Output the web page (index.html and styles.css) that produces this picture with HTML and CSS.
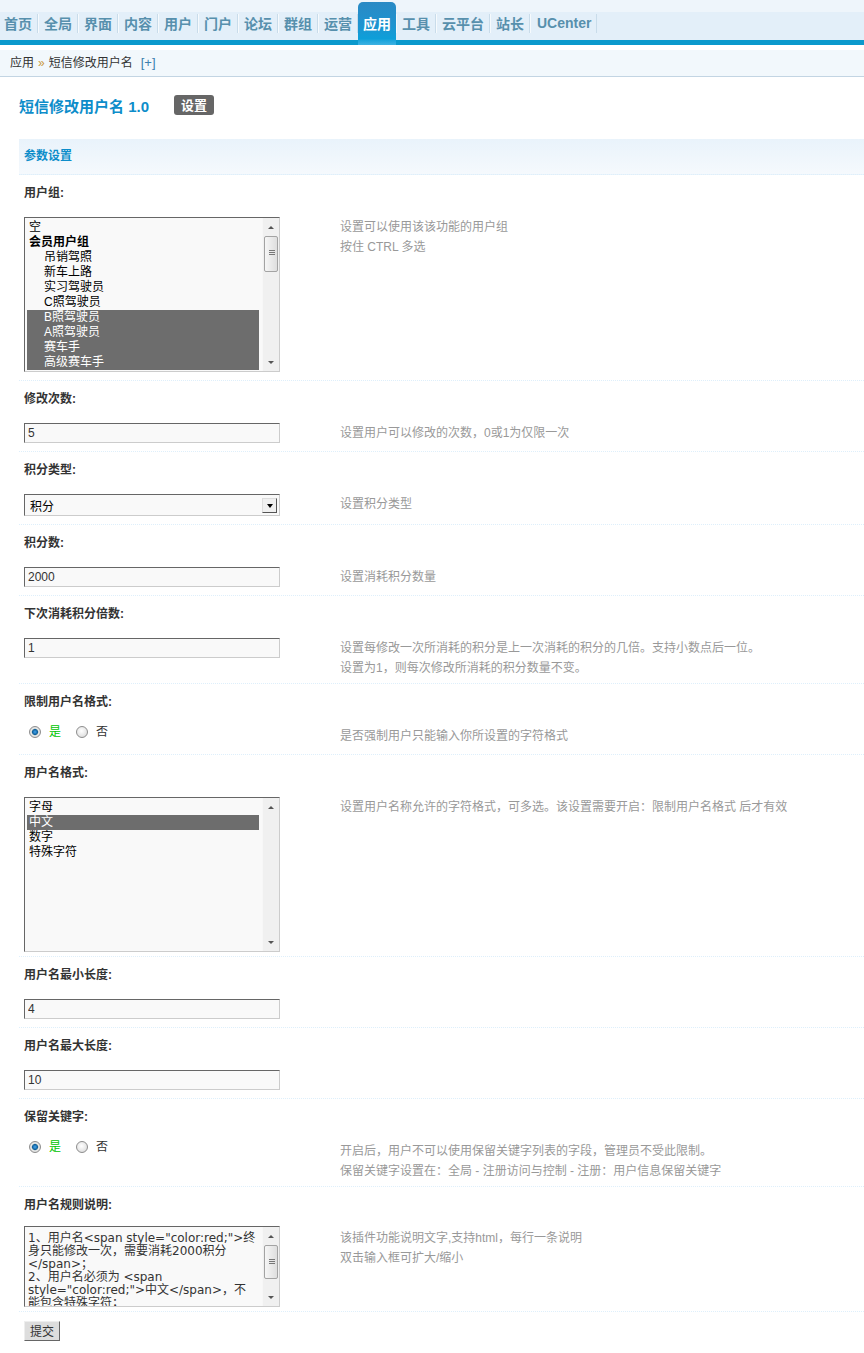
FILE: index.html
```html
<!DOCTYPE html>
<html lang="zh-CN">
<head>
    <meta charset="UTF-8">
    <title>短信修改用户名 - 应用</title>
    <link rel="stylesheet" href="styles.css">
</head>
<body>
    <div class="header">
        <ul class="nav">
            <li><a href="#">首页</a></li>
            <li><a href="#">全局</a></li>
            <li><a href="#">界面</a></li>
            <li><a href="#">内容</a></li>
            <li><a href="#">用户</a></li>
            <li><a href="#">门户</a></li>
            <li><a href="#">论坛</a></li>
            <li><a href="#">群组</a></li>
            <li><a href="#">运营</a></li>
            <li class="active"><a href="#">应用</a></li>
            <li><a href="#">工具</a></li>
            <li><a href="#">云平台</a></li>
            <li><a href="#">站长</a></li>
            <li><a href="#" class="uc">UCenter</a></li>
        </ul>
    </div>

    <div class="crumb">应用<em>&raquo;</em>短信修改用户名<a href="#" class="plus">[+]</a></div>

    <div class="main">
        <div class="title-bar">
            <h3>短信修改用户名 1.0</h3>
            <span class="btn-dark">设置</span>
        </div>

        <div class="section-head">参数设置</div>

        <!-- 用户组 -->
        <div class="item">
            <div class="item-label">用户组:</div>
            <div class="item-row">
                <div class="field">
                    <div class="listbox">
                        <ul class="options">
                            <li>空</li>
                            <li class="group">会员用户组</li>
                            <li class="sub">吊销驾照</li>
                            <li class="sub">新车上路</li>
                            <li class="sub">实习驾驶员</li>
                            <li class="sub">C照驾驶员</li>
                            <li class="sub selected">B照驾驶员</li>
                            <li class="sub selected">A照驾驶员</li>
                            <li class="sub selected">赛车手</li>
                            <li class="sub selected">高级赛车手</li>
                        </ul>
                        <div class="vscroll">
                            <span class="arr up"></span>
                            <span class="thumb"></span>
                            <span class="track"></span>
                            <span class="arr down"></span>
                        </div>
                    </div>
                </div>
                <div class="tips">设置可以使用该该功能的用户组<br>按住 CTRL 多选</div>
            </div>
        </div>

        <!-- 修改次数 -->
        <div class="item">
            <div class="item-label">修改次数:</div>
            <div class="item-row">
                <div class="field"><input class="txt" type="text" value="5"></div>
                <div class="tips">设置用户可以修改的次数，0或1为仅限一次</div>
            </div>
        </div>

        <!-- 积分类型 -->
        <div class="item">
            <div class="item-label">积分类型:</div>
            <div class="item-row">
                <div class="field">
                    <div class="select">
                        <span>积分</span>
                        <span class="drop"><i></i></span>
                    </div>
                </div>
                <div class="tips">设置积分类型</div>
            </div>
        </div>

        <!-- 积分数 -->
        <div class="item">
            <div class="item-label">积分数:</div>
            <div class="item-row">
                <div class="field"><input class="txt" type="text" value="2000"></div>
                <div class="tips">设置消耗积分数量</div>
            </div>
        </div>

        <!-- 下次消耗积分倍数 -->
        <div class="item">
            <div class="item-label">下次消耗积分倍数:</div>
            <div class="item-row">
                <div class="field"><input class="txt" type="text" value="1"></div>
                <div class="tips">设置每修改一次所消耗的积分是上一次消耗的积分的几倍。支持小数点后一位。<br>设置为1，则每次修改所消耗的积分数量不变。</div>
            </div>
        </div>

        <!-- 限制用户名格式 -->
        <div class="item">
            <div class="item-label">限制用户名格式:</div>
            <div class="item-row">
                <div class="field">
                    <ul class="radios">
                        <li><span class="radio checked"></span><span class="yes">是</span></li>
                        <li><span class="radio"></span><span>否</span></li>
                    </ul>
                </div>
                <div class="tips">是否强制用户只能输入你所设置的字符格式</div>
            </div>
        </div>

        <!-- 用户名格式 -->
        <div class="item">
            <div class="item-label">用户名格式:</div>
            <div class="item-row short">
                <div class="field">
                    <div class="listbox">
                        <ul class="options">
                            <li>字母</li>
                            <li class="selected">中文</li>
                            <li>数字</li>
                            <li>特殊字符</li>
                        </ul>
                        <div class="vscroll">
                            <span class="arr up"></span>
                            <span class="track"></span>
                            <span class="arr down"></span>
                        </div>
                    </div>
                </div>
                <div class="tips">设置用户名称允许的字符格式，可多选。该设置需要开启：限制用户名格式 后才有效</div>
            </div>
        </div>

        <!-- 用户名最小长度 -->
        <div class="item">
            <div class="item-label">用户名最小长度:</div>
            <div class="item-row">
                <div class="field"><input class="txt" type="text" value="4"></div>
                <div class="tips"></div>
            </div>
        </div>

        <!-- 用户名最大长度 -->
        <div class="item">
            <div class="item-label">用户名最大长度:</div>
            <div class="item-row">
                <div class="field"><input class="txt" type="text" value="10"></div>
                <div class="tips"></div>
            </div>
        </div>

        <!-- 保留关键字 -->
        <div class="item">
            <div class="item-label">保留关键字:</div>
            <div class="item-row">
                <div class="field">
                    <ul class="radios">
                        <li><span class="radio checked"></span><span class="yes">是</span></li>
                        <li><span class="radio"></span><span>否</span></li>
                    </ul>
                </div>
                <div class="tips">开启后，用户不可以使用保留关键字列表的字段，管理员不受此限制。<br>保留关键字设置在：全局 - 注册访问与控制 - 注册：用户信息保留关键字</div>
            </div>
        </div>

        <!-- 用户名规则说明 -->
        <div class="item">
            <div class="item-label">用户名规则说明:</div>
            <div class="item-row tight">
                <div class="field">
                    <div class="textarea">
                        <div class="ta-text">
                            <div>1、用户名&lt;span style="color:red;"&gt;终</div>
                            <div>身只能修改一次，需要消耗2000积分</div>
                            <div>&lt;/span&gt;；</div>
                            <div>2、用户名必须为 &lt;span</div>
                            <div>style="color:red;"&gt;中文&lt;/span&gt;，不</div>
                            <div>能包含特殊字符；</div>
                        </div>
                        <div class="vscroll">
                            <span class="arr up"></span>
                            <span class="thumb"></span>
                            <span class="track"></span>
                            <span class="arr down"></span>
                        </div>
                    </div>
                </div>
                <div class="tips ta-tips">该插件功能说明文字,支持html，每行一条说明<br>双击输入框可扩大/缩小</div>
            </div>
        </div>

        <div class="submit-row">
            <button class="btn" type="button">提交</button>
        </div>
    </div>
</body>
</html>
```

FILE: styles.css
```css
body {
    margin: 0;
    font: 12px "Liberation Sans", "Noto Sans CJK SC", sans-serif;
    color: #333;
    background: #fff;
}

ul {
    list-style: none;
    margin: 0;
    padding: 0;
}

a {
    text-decoration: none;
}

/* 顶部导航 */
.header {
    height: 40px;
    background: linear-gradient(#eef5fb 0, #eef5fb 12px, #e3eff9 12px);
    border-bottom: 5px solid #0b99cc;
}

.nav {
    display: flex;
    align-items: flex-start;
    height: 28px;
    padding-top: 12px;
    margin-left: -2px;
}

.nav a {
    display: block;
    margin: 2px 0 7px;
    padding: 0 5px;
    font: bold 14px/19px "Noto Sans CJK SC", sans-serif;
    color: #5790ad;
    border-left: 1px solid #f6fafd;
    border-right: 1px solid #c9dcea;
}

.nav a.uc {
    font: bold 14px/19px "Liberation Sans", sans-serif;
    padding-left: 6px;
}

.nav .active a {
    margin: -10px 0 0;
    padding: 12px 5px 12px;
    color: #fff;
    border: 0;
    border-radius: 5px 5px 0 0;
    background: linear-gradient(#2a89c4 0, #1e94d0 55%, #0d9fd9 85%, #3fb2e2 100%);
}

/* 面包屑 */
.crumb {
    margin-top: 5px;
    height: 26px;
    line-height: 26px;
    padding-left: 10px;
    background: #f2f8fc;
    border-bottom: 1px solid #c3d5e3;
    color: #333;
}

.crumb em {
    font-style: normal;
    color: #c99a3e;
    margin: 0 4px;
}

.crumb .plus {
    color: #3b7fae;
    margin-left: 8px;
    font-size: 13px;
}

/* 主体 */
.main {
    padding-left: 19px;
}

.title-bar {
    display: flex;
    align-items: center;
    height: 20px;
    margin-top: 18px;
}

.title-bar h3 {
    margin: 0;
    font: bold 15px "Liberation Sans", "Noto Sans CJK SC", sans-serif;
    color: #0d8dca;
}

.btn-dark {
    margin-left: 25px;
    padding: 0 7px;
    height: 20px;
    border-radius: 3px;
    background: #666;
    color: #fff;
    font: bold 13px/20px "Noto Sans CJK SC", sans-serif;
}

.section-head {
    margin-top: 24px;
    height: 35px;
    line-height: 35px;
    padding-left: 5px;
    background: linear-gradient(#e9f3fb, #f5f9fd);
    border-bottom: 1px dotted #deeffb;
    font-weight: bold;
    color: #0d8dca;
}

.item {
    border-bottom: 1px dotted #deeffb;
}

.item-label {
    padding: 11px 5px 0;
    line-height: 14px;
    font-weight: bold;
    color: #333;
}

.item-row {
    display: flex;
    align-items: flex-start;
    padding: 17px 0 8px 5px;
}

.item-row.short {
    padding-bottom: 4px;
}

.item-row.tight {
    padding-top: 14px;
    padding-bottom: 4px;
}

.field {
    flex: none;
    width: 316px;
}

.tips {
    flex: 1;
    line-height: 20px;
    margin-bottom: -3px;
    color: #999;
}

.ta-tips {
    padding-top: 2px;
}

/* 输入框 */
.txt {
    display: block;
    box-sizing: border-box;
    width: 256px;
    height: 20px;
    margin: 0;
    padding: 0 3px;
    border: 1px solid;
    border-color: #666 #ccc #ccc #666;
    background: #f9f9f9;
    font: 12px "Liberation Sans", sans-serif;
    color: #333;
    outline: none;
}

/* 多选列表 */
.listbox,
.textarea {
    display: flex;
    box-sizing: border-box;
    width: 256px;
    height: 155px;
    border: 1px solid;
    border-color: #666 #ccc #ccc #666;
    background: #f9f9f9;
    overflow: hidden;
}

.options {
    flex: 1;
    padding: 2px 3px 0 2px;
    overflow: hidden;
    color: #000;
}

.options li {
    height: 15px;
    line-height: 15px;
    padding-left: 2px;
    white-space: nowrap;
}

.options .group {
    font-weight: bold;
}

.options .sub {
    padding-left: 17px;
}

.options .selected {
    background: #6d6d6d;
    color: #fff;
}

.vscroll {
    flex: none;
    display: flex;
    flex-direction: column;
    width: 16px;
    background: #f0f0f0;
    border-left: 1px solid #f7f7f7;
}

.vscroll .arr {
    position: relative;
    height: 18px;
    flex: none;
}

.vscroll .arr::after {
    content: "";
    position: absolute;
    left: 5px;
    border-left: 3px solid transparent;
    border-right: 3px solid transparent;
}

.vscroll .up::after {
    top: 8px;
    border-bottom: 3px solid #555;
}

.vscroll .down::after {
    top: 8px;
    border-top: 3px solid #555;
}

.vscroll .thumb {
    position: relative;
    flex: none;
    height: 34px;
    margin: 0 1px;
    border: 1px solid #a3a3a3;
    border-radius: 2px;
    background: linear-gradient(to right, #f6f6f6, #dedede);
}

.vscroll .thumb::after {
    content: "";
    position: absolute;
    left: 4px;
    top: 13px;
    width: 6px;
    height: 5px;
    background: repeating-linear-gradient(#777 0, #777 1px, transparent 1px, transparent 2px);
}

.vscroll .track {
    flex: 1;
}

/* 下拉框 */
.select {
    display: flex;
    align-items: center;
    box-sizing: border-box;
    width: 256px;
    height: 22px;
    padding-left: 5px;
    border: 1px solid;
    border-color: #666 #ccc #ccc #666;
    background: #f9f9f9;
    color: #000;
}

.select .drop {
    display: flex;
    align-items: center;
    justify-content: center;
    box-sizing: border-box;
    width: 15px;
    height: 15px;
    margin-left: auto;
    margin-right: 2px;
    border: 1px solid;
    border-color: #ddd #555 #555 #ddd;
    background: #f0f0f0;
}

.select .drop i {
    border-top: 4px solid #000;
    border-left: 3px solid transparent;
    border-right: 3px solid transparent;
    margin-top: 1px;
}

/* 单选 */
.radios {
    display: flex;
    height: 20px;
    padding-left: 5px;
}

.radios li {
    display: flex;
    align-items: flex-start;
    line-height: 12px;
    margin-right: 15px;
}

.radio {
    box-sizing: border-box;
    width: 12px;
    height: 12px;
    margin-right: 8px;
    border-radius: 50%;
    border: 1px solid #8d8d8d;
    background: radial-gradient(circle at 45% 40%, #fff 0, #e6e6e6 60%, #cfcfcf 100%);
}

.radio.checked {
    background: radial-gradient(circle, #45a6ea 0, #0f5f9f 2.6px, #8aa 3.1px, #e9e9e9 3.7px, #d2d2d2 100%);
}

.yes {
    color: #00c400;
}

/* 文本域 */
.textarea {
    height: 81px;
}

.ta-text {
    flex: 1;
    padding: 5px 0 0 3px;
    font: 12px/13px "DejaVu Sans", "Noto Sans CJK SC", sans-serif;
    color: #333;
    white-space: nowrap;
    overflow: hidden;
}

.textarea .thumb {
    height: 32px;
}

.submit-row {
    padding: 9px 5px 20px;
}

.btn {
    height: 20px;
    margin: 0;
    padding: 0 5px;
    border: 1px solid;
    border-color: #eee #666 #666 #eee;
    background: #ddd;
    font: 12px/18px "Noto Sans CJK SC", sans-serif;
    color: #333;
}
```
